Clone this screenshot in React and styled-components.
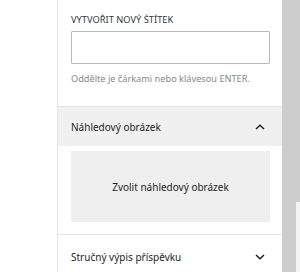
import React from "react";
import styled, { createGlobalStyle } from "styled-components";

const GlobalStyle = createGlobalStyle`
  html, body {
    margin: 0;
    padding: 0;
    background: #fff;
  }
  body {
    font-family: "Noto Sans", "Open Sans", sans-serif;
    color: #1e1e1e;
  }
`;

const Page = styled.div`
  display: flex;
  width: 300px;
  height: 272px;
  overflow: hidden;
`;

const Gutter = styled.div`
  width: 57px;
  flex-shrink: 0;
  background: #fff;
  border-right: 1px solid #e6e6e6;
`;

const Sidebar = styled.div`
  width: 224px;
  flex-shrink: 0;
  display: flex;
  flex-direction: column;
  background: #fff;

  & > * {
    flex-shrink: 0;
  }
`;

const Scrollbar = styled.div`
  flex: 1;
  background: #cdcdcd;
  display: flex;
  flex-direction: column;
  padding-top: 202px;
  padding-left: 14px;
`;

const ScrollEdge = styled.div`
  flex: 1;
  background: #f3f3f3;
`;

const TagSection = styled.div`
  padding: 14px 12px 0 13px;
  height: 107px;
  box-sizing: border-box;
  border-bottom: 1px solid #e2e4e7;
`;

const Label = styled.div`
  font-size: 9.3px;
  line-height: 12px;
  text-transform: uppercase;
  color: #32373c;
  margin-bottom: 5px;
`;

const Input = styled.input`
  display: block;
  box-sizing: border-box;
  width: 199px;
  height: 33px;
  border: 1px solid #b4b9be;
  border-radius: 1px;
  background: #fff;
  margin: 0;
`;

const Help = styled.div`
  font-size: 9.2px;
  line-height: 13px;
  color: #7e8993;
  margin-top: 8px;
`;

const PanelHeader = styled.div`
  display: flex;
  align-items: center;
  justify-content: space-between;
  height: ${p => p.$height}px;
  padding: 0 17px 0 13px;
  box-sizing: border-box;
  background: ${p => (p.$open ? "#f0f0f0" : "#fff")};
  font-size: 10px;
  color: #1e1e1e;
`;

const PanelBody = styled.div`
  padding: 5px 12px 12px 13px;
  border-bottom: 1px solid #e2e4e7;
`;

const ImageButton = styled.div`
  height: 71px;
  width: 199px;
  display: flex;
  align-items: center;
  justify-content: center;
  background: #efefef;
  font-size: 10px;
  color: #1e1e1e;
`;

const Chevron = ({ up }) => (
  <svg width="10" height="6" viewBox="0 0 10 6">
    <path
      d={up ? "M1 5 L5 1.2 L9 5" : "M1 1 L5 4.8 L9 1"}
      fill="none"
      stroke="#1e1e1e"
      strokeWidth="1.5"
    />
  </svg>
);

export default function App() {
  return (
    <>
      <GlobalStyle />
      <Page>
        <Gutter />
        <Sidebar>
          <TagSection>
            <Label>Vytvořit nový štítek</Label>
            <Input type="text" />
            <Help>Oddělte je čárkami nebo klávesou ENTER.</Help>
          </TagSection>
          <PanelHeader $open $height={39}>
            <span>Náhledový obrázek</span>
            <Chevron up />
          </PanelHeader>
          <PanelBody>
            <ImageButton>Zvolit náhledový obrázek</ImageButton>
          </PanelBody>
          <PanelHeader $height={44}>
            <span>Stručný výpis příspěvku</span>
            <Chevron />
          </PanelHeader>
        </Sidebar>
        <Scrollbar>
          <ScrollEdge />
        </Scrollbar>
      </Page>
    </>
  );
}
